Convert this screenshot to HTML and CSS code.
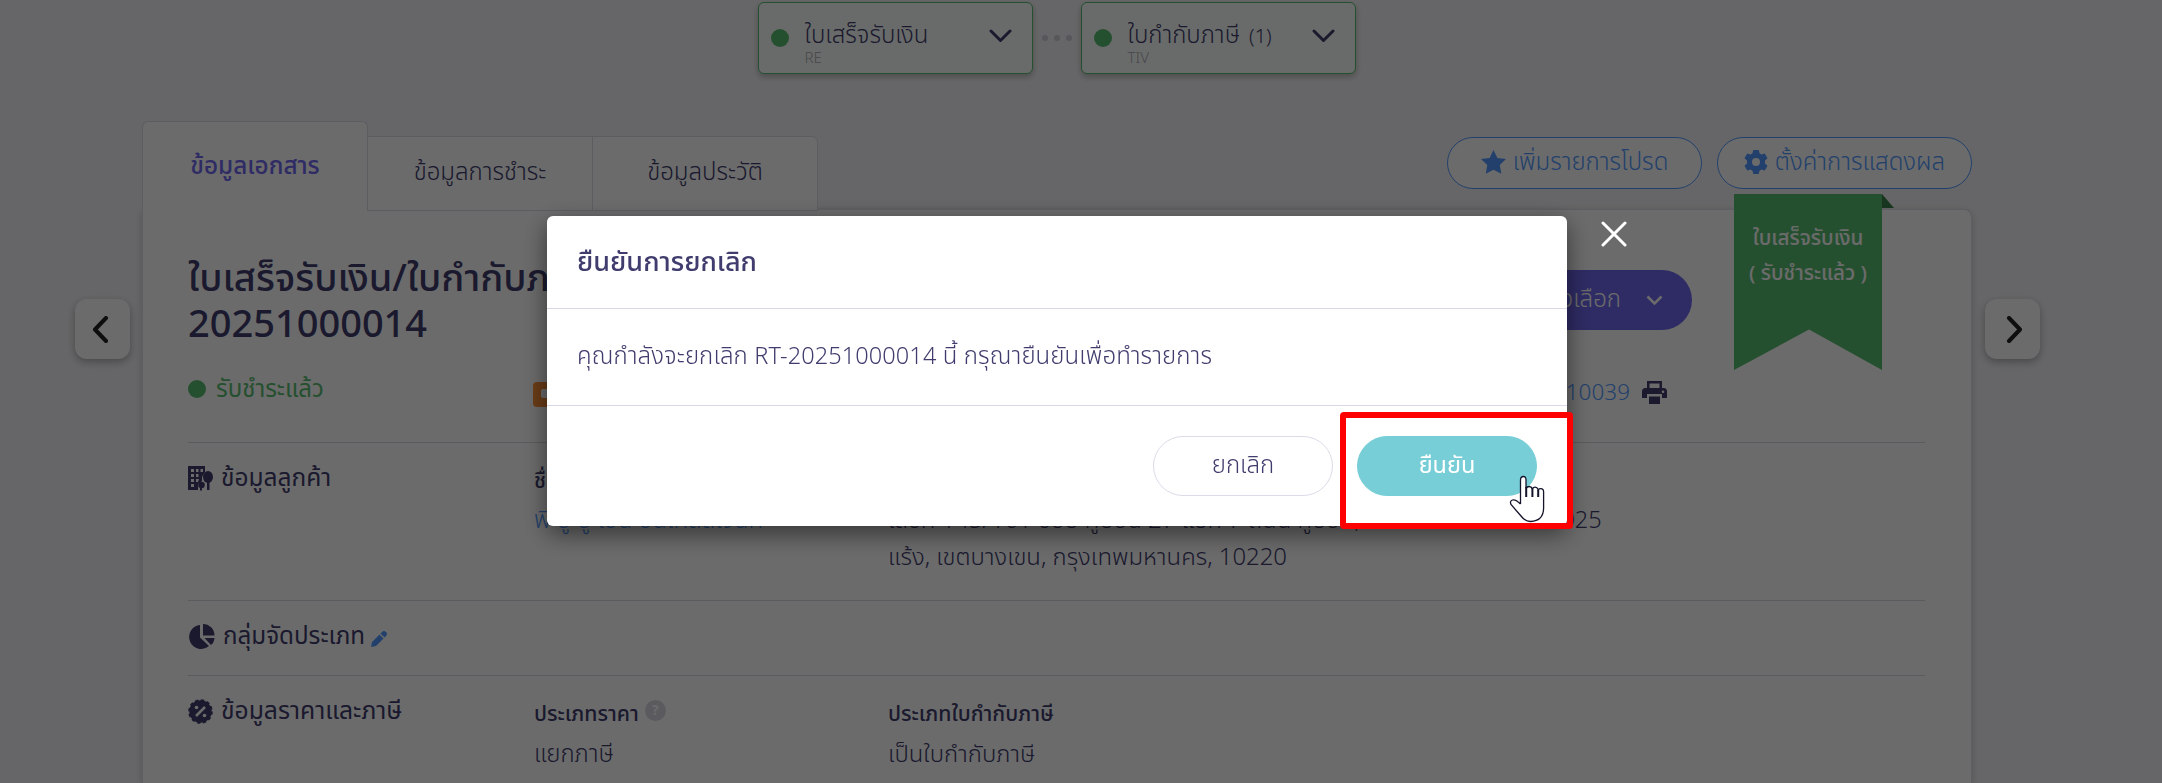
FILE: index.html
```html
<!DOCTYPE html>
<html lang="th">
<head>
    <meta charset="UTF-8">
    <meta name="viewport" content="width=device-width, initial-scale=1.0">
    <title>ใบเสร็จรับเงิน/ใบกำกับภาษี</title>
    <link rel="stylesheet" href="styles.css">
</head>
<body>
    <div class="page">
        <div class="flow">
            <div class="flow-item">
                <i class="dot"></i>
                <div class="flow-text">
                    <p class="flow-name">ใบเสร็จรับเงิน</p>
                    <p class="flow-code">RE</p>
                </div>
                <svg class="chevron" width="23" height="14" viewBox="0 0 23 14"><path d="M2 2l9.500 9.500L21 2"/></svg>
            </div>
            <div class="flow-dots"><i></i><i></i><i></i></div>
            <div class="flow-item">
                <i class="dot"></i>
                <div class="flow-text">
                    <p class="flow-name">ใบกำกับภาษี <small>(1)</small></p>
                    <p class="flow-code">TIV</p>
                </div>
                <svg class="chevron" width="23" height="14" viewBox="0 0 23 14"><path d="M2 2l9.500 9.500L21 2"/></svg>
            </div>
        </div>

        <div class="tabs">
            <a class="tab active">ข้อมูลเอกสาร</a>
            <a class="tab">ข้อมูลการชำระ</a>
            <a class="tab">ข้อมูลประวัติ</a>
            <div class="tools">
                <a class="tool">
                    <svg width="25" height="24" viewBox="0 0 25 24"><path d="M12.500 0l3.900 7.900 8.600 1.200-6.200 6 1.500 8.600-7.800-4-7.700 4 1.500-8.600L0 9.100l8.600-1.200z"/></svg>
                    <span>เพิ่มรายการโปรด</span>
                </a>
                <a class="tool">
                    <svg width="24" height="24" viewBox="0 0 24 24"><path fill-rule="evenodd" d="M9.300 0h5.400l.8 3.300 2 1.200 3.300-1 2.700 4.700-2.500 2.400v2.800l2.500 2.400-2.700 4.700-3.300-1-2 1.200-.8 3.300H9.300l-.8-3.300-2-1.200-3.300 1L.5 15.800 3 13.400v-2.800L.5 8.200l2.700-4.700 3.300 1 2-1.200zM12 8a4 4 0 1 0 0 8 4 4 0 0 0 0-8z"/></svg>
                    <span>ตั้งค่าการแสดงผล</span>
                </a>
            </div>
        </div>

        <div class="panel">
            <div class="ribbon">
                <p>ใบเสร็จรับเงิน</p>
                <p>( รับชำระแล้ว )</p>
            </div>
            <div class="head">
                <h1>ใบเสร็จรับเงิน/ใบกำกับภาษี<br>20251000014</h1>
                <a class="option">ตัวเลือก
                    <svg width="17" height="10" viewBox="0 0 17 10"><path d="M1.500 1.500l7 7 7-7"/></svg>
                </a>
            </div>
            <div class="status">
                <div class="paid"><i class="dot"></i>รับชำระแล้ว</div>
                <i class="tag"></i>
                <div class="ref"><a>RT-202510039</a>
                    <svg width="25" height="23" viewBox="0 0 25 23"><path fill-rule="evenodd" d="M5 0h15v7h1.500Q25 7 25 10.500V17h-5v-4H5v4H0v-6.500Q0 7 3.500 7H5zm2.500 2.500V7h10V2.500zM21 9.500a1.300 1.300 0 1 0 0 2.600 1.300 1.300 0 0 0 0-2.600z"/><path d="M7 15.500h11V23H7z"/></svg>
                </div>
            </div>

            <div class="section customer">
                <h2>
                    <svg width="25" height="25" viewBox="0 0 25 25"><path fill-rule="evenodd" d="M0 0h17v6l-3 5v4l-4 3v6H0zM3 3v3h3V3zm5 0v3h2.500V3zm4.500 0v3H15V3zM3 8v3h3V8zm5 0v3h2.500V8zM3 13v3h3v-3zm5 0v3h2l1-3zM3 18v3h3v-3z"/><ellipse cx="20" cy="11" rx="5" ry="6"/><path d="M19 14h2.500v10H19zM12 21h2v3.500h-2z"/><circle cx="13.500" cy="19" r="3.300"/></svg>
                    ข้อมูลลูกค้า
                </h2>
                <dl>
                    <dt>ชื่อ</dt>
                    <dd><a>พี ยู ยู เอ็น อินเทลลิเจนท์</a></dd>
                </dl>
                <dl class="wide">
                    <dt>ที่อยู่</dt>
                    <dd>เลขที่ 145/161 ซอย คู้บอน 27 แยก 7 ถนน คู้บอน, แขวงท่า<br>แร้ง, เขตบางเขน, กรุงเทพมหานคร, 10220</dd>
                </dl>
                <dl class="date">
                    <dt>วันที่</dt>
                    <dd>27/10/2025</dd>
                </dl>
            </div>
            <div class="section category">
                <h2>
                    <svg width="26" height="25" viewBox="0 0 26 25"><path d="M11 1v12.500l9 8.500A12 12 0 1 1 11 1zM14 0a11.500 11.500 0 0 1 11.500 11.500H14zM15.500 14h10q-.3 4.500-3.500 7z"/></svg>
                    กลุ่มจัดประเภท
                    <svg class="pencil" width="16" height="16" viewBox="0 0 16 16"><path d="M0 16l1-5 7.500-7.500 4 4L5 15zM9.500 2.500L11 1q2-2 4 0t0 4l-1.500 1.500z"/></svg>
                </h2>
            </div>
            <div class="section price">
                <h2>
                    <svg width="25" height="25" viewBox="0 0 25 25"><circle cx="12.500" cy="12.500" r="11.200"/><circle class="scallop" cx="12.500" cy="12.500" r="11"/><path class="cut" d="M8 17l9-9"/><circle class="hole" cx="8.500" cy="8.500" r="1.800"/><circle class="hole" cx="16.500" cy="16.500" r="1.800"/></svg>
                    ข้อมูลราคาและภาษี
                </h2>
                <dl>
                    <dt>ประเภทราคา<i class="help">?</i></dt>
                    <dd>แยกภาษี</dd>
                </dl>
                <dl class="wide">
                    <dt>ประเภทใบกำกับภาษี</dt>
                    <dd>เป็นใบกำกับภาษี</dd>
                </dl>
            </div>
        </div>
        <a class="pager prev"><svg width="17" height="27" viewBox="0 0 17 27"><path d="M14 2L3 13.500 14 25"/></svg></a>
        <a class="pager next"><svg width="17" height="27" viewBox="0 0 17 27"><path d="M3 2l11 11.500L3 25"/></svg></a>
    </div>

    <div class="overlay"></div>
    <div class="modal">
        <div class="modal-title">ยืนยันการยกเลิก</div>
        <div class="modal-body">คุณกำลังจะยกเลิก <span class="number">RT-20251000014</span> นี้ กรุณายืนยันเพื่อทำรายการ</div>
        <div class="modal-footer">
            <a class="btn">ยกเลิก</a>
            <a class="btn confirm">ยืนยัน</a>
        </div>
    </div>
    <svg class="close" width="26" height="26" viewBox="0 0 26 26"><path d="M2 2l22 22M24 2L2 24"/></svg>
    <div class="highlight"></div>
    <svg class="cursor" width="36" height="48" viewBox="0 0 36 48"><path d="M11.500 29V5q0-3.500 2.800-3.500T17 5v8.500q1-2 3.200-2t3.200 2.300q.8-1.600 2.800-1.600t3 2.600q.8-1.200 2.600-1.200 2.800 0 2.800 3.400v16Q34.500 46 21.500 46.500 16 46.500 12 41L2 29.500q-1.500-3.500 1.500-4.500t8 4"/><path class="bars" d="M17.200 12v10M23.400 13v9M29.200 15v7"/></svg>
</body>
</html>
```
FILE: styles.css
```css
* {
    margin: 0;
    padding: 0;
    box-sizing: border-box;
}
body {
    width: 2162px;
    height: 783px;
    overflow: hidden;
    background-color: #f4f4f8;
    color: #403d6e;
    font-family: "Noto Sans Thai", "Noto Sans", "Open Sans", sans-serif;
    font-size: 24px;
    font-weight: 300;
    white-space: nowrap;
}
svg {
    flex: none;
    fill: currentColor;
}
.page {
    width: 1830px;
    margin-left: 142px;
    padding-top: 2px;
}
.dot {
    width: 18px;
    height: 18px;
    border-radius: 50%;
    background-color: #5abe72;
}
.flow {
    display: flex;
    justify-content: center;
    padding-right: 1px;
}
.flow-item {
    display: flex;
    width: 275px;
    height: 72px;
    padding: 0 20px 0 12px;
    border: 1px solid #5abe72;
    border-radius: 6px;
    background-color: #fbfffc;
    box-shadow: 0 3px 6px rgba(0, 0, 0, .25);
}
.flow-item .dot {
    margin-top: 26px;
}
.flow-text {
    flex: 1;
    padding: 18px 0 0 16px;
}
.flow-name {
    height: 30px;
    line-height: 30px;
}
.flow-name small {
    margin-left: 3px;
    font-size: 20px;
}
.flow-code {
    font-size: 15px;
    line-height: 15px;
    color: #a9a9b3;
}
.chevron {
    margin-top: 26px;
    fill: none;
    stroke: currentColor;
    stroke-width: 3;
    stroke-linecap: round;
    stroke-linejoin: round;
}
.flow-dots {
    display: flex;
    justify-content: center;
    gap: 6px;
    width: 48px;
    padding-top: 33px;
}
.flow-dots i {
    width: 6px;
    height: 6px;
    border-radius: 50%;
    background-color: #cfcfd8;
}
.tabs {
    display: flex;
    align-items: flex-end;
    height: 90px;
    margin-top: 47px;
    position: relative;
    z-index: 1;
}
.tab {
    width: 226px;
    height: 75px;
    margin-right: -1px;
    border: 1px solid #dcdce8;
    background-color: #ffffff;
    text-align: center;
    line-height: 73px;
}
.tab:nth-child(3) {
    border-radius: 0 6px 0 0;
}
.tab.active {
    height: 90px;
    border-bottom: none;
    border-radius: 6px 6px 0 0;
    color: #7068f0;
    font-size: 24.300px;
    font-weight: 500;
    line-height: 90px;
}
.tools {
    display: flex;
    align-self: flex-start;
    gap: 15px;
    margin-left: auto;
    margin-top: 16px;
}
.tool {
    display: flex;
    align-items: center;
    justify-content: center;
    gap: 7px;
    width: 255px;
    height: 52px;
    padding-bottom: 2px;
    border: 1px solid #529aff;
    border-radius: 26px;
    background-color: #ffffff;
    color: #529aff;
}
.tool span {
    padding-top: 1px;
}
.panel {
    position: relative;
    height: 574px;
    margin-top: -2px;
    padding: 0 46px 0 45px;
    border: 1px solid #e0e0ea;
    border-bottom: none;
    border-radius: 0 8px 0 0;
    background-color: #ffffff;
    box-shadow: 0 2px 8px rgba(0, 0, 0, .18);
}
.ribbon {
    position: absolute;
    right: 89px;
    top: -16px;
    width: 148px;
    height: 176px;
    padding-top: 27px;
    background-color: #5abe72;
    clip-path: polygon(0 0, 100% 0, 100% 100%, 50.700% 77%, 0 100%);
    color: #ffffff;
    text-align: center;
    font-size: 20.600px;
    font-weight: 500;
    line-height: 35px;
}
.panel::before {
    content: "";
    position: absolute;
    right: 77px;
    top: -16px;
    border-style: solid;
    border-width: 14px 0 0 12px;
    border-color: transparent transparent transparent #3b7f4b;
}
.head {
    display: flex;
    justify-content: space-between;
    height: 162px;
    padding-top: 47px;
}
h1 {
    font-size: 38px;
    font-weight: 500;
    line-height: 46px;
}
.option {
    display: flex;
    align-items: center;
    justify-content: flex-end;
    gap: 25px;
    width: 210px;
    height: 60px;
    margin: 13px 233px 0 0;
    padding-right: 29px;
    border-radius: 30px;
    background-color: #7068f0;
    color: #ffffff;
}
.option svg {
    fill: none;
    stroke: currentColor;
    stroke-width: 2.500;
}
.status {
    display: flex;
    height: 70px;
}
.paid {
    display: flex;
    align-items: flex-start;
    width: 345px;
    color: #5abe72;
    font-weight: 400;
    line-height: 37px;
}
.paid .dot {
    margin: 8px 10px 0 0;
}
/* orange document badge */
.tag {
    width: 80px;
    height: 25px;
    margin-top: 10px;
    padding: 7px 8px;
    border-radius: 4px;
    background-color: #fb9038;
}
.tag::before {
    content: "";
    display: block;
    width: 12px;
    height: 9px;
    border-radius: 2px;
    background-color: #ffffff;
}
.ref {
    display: flex;
    align-items: flex-start;
    justify-content: flex-end;
    gap: 12px;
    width: 200px;
    margin: 0 258px 0 auto;
    font-size: 22.500px;
    line-height: 43px;
}
.ref a, dd a {
    color: #529aff;
}
.ref svg {
    margin-top: 9px;
}
.section {
    display: flex;
    border-top: 1px solid #d9d9e2;
}
.customer {
    height: 158px;
}
.category {
    height: 75px;
}
h2 {
    display: flex;
    align-items: flex-start;
    gap: 8px;
    width: 346px;
    padding-top: 19px;
    font-size: 24.500px;
    font-weight: 400;
    line-height: 34px;
}
h2 svg {
    margin-top: 4px;
}
.category h2 {
    font-size: 24.200px;
}
.category svg {
    margin-left: 1px;
}
h2 .pencil {
    margin: 11px 0 0 -2px;
    color: #529aff;
}
.price h2 {
    font-size: 24.700px;
}
.scallop {
    fill: none;
    stroke: currentColor;
    stroke-width: 2.600;
    stroke-dasharray: 3.300 2.460;
}
.cut {
    stroke: #ffffff;
    stroke-width: 2.500;
}
.hole {
    fill: #ffffff;
}
dl {
    flex: none;
    width: 354px;
    padding-top: 22px;
}
dl.wide {
    width: 590px;
}
dl.wide dd {
    font-size: 23.900px;
}
dl.date {
    width: 124px;
}
.date dd {
    font-size: 23.500px;
}
dt {
    display: flex;
    height: 35px;
    font-size: 21.200px;
    font-weight: 500;
    line-height: 34px;
}
dd {
    padding-top: 3px;
    line-height: 37px;
}
.price dd {
    padding-top: 4px;
}
.help {
    width: 21px;
    height: 21px;
    margin: 2px 0 0 6px;
    border-radius: 50%;
    background-color: #d9d9e2;
    color: #ffffff;
    text-align: center;
    font-size: 14px;
    font-style: normal;
    font-weight: 700;
    line-height: 21px;
}
.pager {
    position: absolute;
    top: 299px;
    display: flex;
    align-items: center;
    justify-content: center;
    width: 55px;
    height: 60px;
    border-radius: 12px;
    background-color: #ffffff;
    box-shadow: 0 3px 8px rgba(0, 0, 0, .3);
}
.prev {
    left: 75px;
    padding-right: 5px;
}
.next {
    left: 1985px;
    padding-left: 4px;
}
.pager svg {
    fill: none;
    stroke: #222222;
    stroke-width: 4;
    stroke-linecap: round;
    stroke-linejoin: round;
}
.overlay {
    position: fixed;
    top: 0;
    left: 0;
    z-index: 10;
    width: 100%;
    height: 100%;
    background: rgba(0, 0, 0, .58);
}
.modal {
    position: fixed;
    top: 216px;
    left: 547px;
    z-index: 11;
    width: 1020px;
    height: 310px;
    border-radius: 6px;
    background-color: #ffffff;
    box-shadow: 0 8px 24px rgba(0, 0, 0, .5);
}
.modal-title {
    height: 93px;
    padding: 26px 30px;
    border-bottom: 1px solid #d9d8e6;
    font-size: 27px;
    font-weight: 500;
    line-height: 42px;
}
.modal-body {
    height: 97px;
    padding: 27px 30px;
    border-bottom: 1px solid #d9d8e6;
    letter-spacing: .1px;
    line-height: 43px;
}
.number {
    font-size: 23.500px;
}
.modal-footer {
    display: flex;
    justify-content: flex-end;
    gap: 24px;
    padding: 30px;
}
.btn {
    width: 180px;
    height: 60px;
    border: 1px solid #dcdbe8;
    border-radius: 30px;
    text-align: center;
    line-height: 59px;
}
.btn.confirm {
    border-color: #78ced7;
    background-color: #78ced7;
    color: #ffffff;
    font-size: 23.500px;
    font-weight: 400;
}
.close {
    position: fixed;
    left: 1601px;
    top: 221px;
    z-index: 12;
    stroke: #ffffff;
    stroke-width: 3;
    stroke-linecap: round;
}
.highlight {
    position: fixed;
    left: 1340px;
    top: 412px;
    z-index: 12;
    width: 233px;
    height: 117px;
    border: 6px solid #ff0000;
    border-radius: 4px;
}
.cursor {
    position: fixed;
    left: 1509px;
    top: 475px;
    z-index: 13;
    fill: #ffffff;
    stroke: #14142b;
    stroke-width: 1.300;
}
.cursor .bars {
    stroke-width: 2;
}
```
